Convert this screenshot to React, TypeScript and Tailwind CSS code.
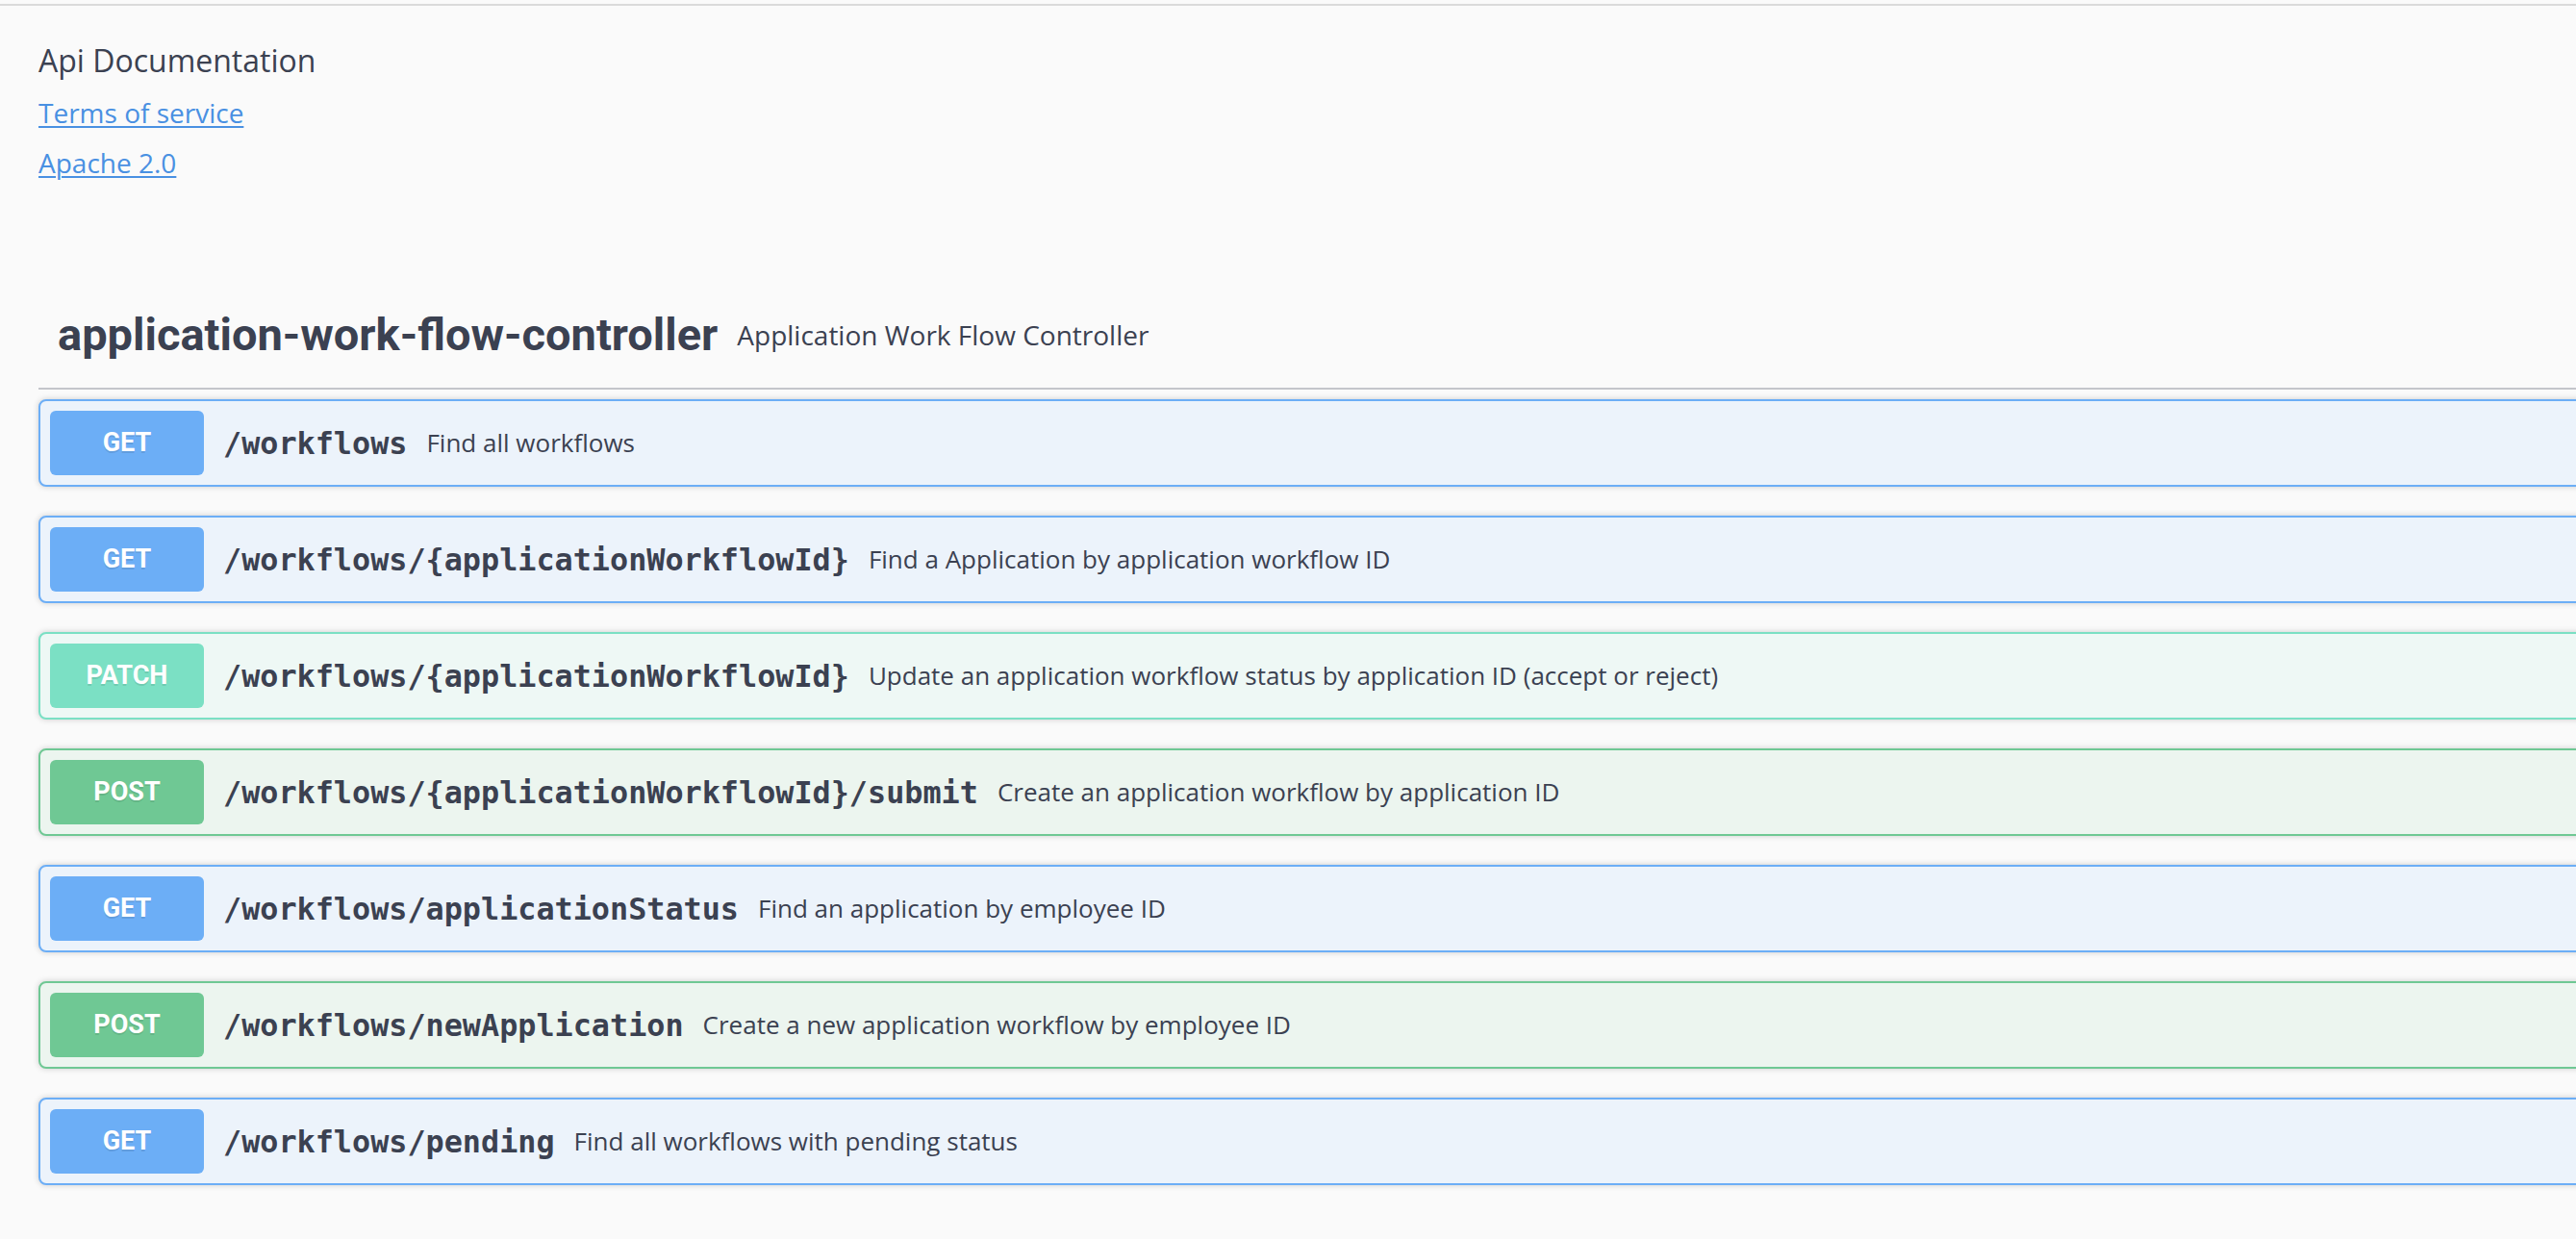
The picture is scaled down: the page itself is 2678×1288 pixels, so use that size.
const SANS = "font-['Open_Sans',sans-serif]";

type Method = "GET" | "POST" | "PATCH";

interface Operation {
  method: Method;
  path: string;
  summary: string;
}

const METHOD_STYLES: Record<Method, { block: string; badge: string }> = {
  GET: { block: "border-[#6caef6] bg-[#ecf3fb]", badge: "bg-[#6caef6]" },
  POST: { block: "border-[#6fc894] bg-[#ecf5ef]", badge: "bg-[#6fc894]" },
  PATCH: { block: "border-[#7be0c4] bg-[#eef8f5]", badge: "bg-[#7be0c4]" }
};

const OPERATIONS: Operation[] = [
  { method: "GET", path: "/workflows", summary: "Find all workflows" },
  {
    method: "GET",
    path: "/workflows/{applicationWorkflowId}",
    summary: "Find a Application by application workflow ID"
  },
  {
    method: "PATCH",
    path: "/workflows/{applicationWorkflowId}",
    summary: "Update an application workflow status by application ID (accept or reject)"
  },
  {
    method: "POST",
    path: "/workflows/{applicationWorkflowId}/submit",
    summary: "Create an application workflow by application ID"
  },
  { method: "GET", path: "/workflows/applicationStatus", summary: "Find an application by employee ID" },
  { method: "POST", path: "/workflows/newApplication", summary: "Create a new application workflow by employee ID" },
  { method: "GET", path: "/workflows/pending", summary: "Find all workflows with pending status" }
];

function OperationRow({ op }: { op: Operation }) {
  const style = METHOD_STYLES[op.method];
  return (
    <div
      className={`mb-[30px] flex items-center rounded-[8px] border-2 p-[10px] shadow-[0_0_6px_rgba(0,0,0,0.19)] ${style.block}`}
    >
      <span
        className={`flex h-[67px] w-[160px] shrink-0 items-center justify-center rounded-[6px] font-['Roboto',sans-serif] text-[27px] font-bold text-white [text-shadow:0_2px_0_rgba(0,0,0,0.1)] ${style.badge}`}
      >
        {op.method}
      </span>
      <span className="px-5 font-['DejaVu_Sans_Mono',monospace] text-[31.8px] font-bold text-[#3b4151]">
        {op.path}
      </span>
      <span className={`${SANS} text-[26px] text-[#3b4151]`}>{op.summary}</span>
    </div>
  );
}

export default function App() {
  return (
    <div className={`h-[1288px] w-full overflow-hidden bg-[#fafafa] ${SANS}`}>
      <div className="mt-1 h-[2px] w-full bg-[#dadada]" />
      <div className="w-[2920px] px-10">
        {/* info */}
        <div className="mt-[35px] text-[32px] leading-[44px] text-[#3b4151]">Api Documentation</div>
        <div className="mt-3 text-[28px] leading-[40px]">
          <a href="#" className="text-[#4990e2] underline decoration-[2px] underline-offset-[3px]">
            Terms of service
          </a>
        </div>
        <div className="mt-3 text-[28px] leading-[40px]">
          <a href="#" className="text-[#4990e2] underline decoration-[2px] underline-offset-[3px]">
            Apache 2.0
          </a>
        </div>

        {/* tag section */}
        <h4 className="mt-[111px] mb-[10px] flex items-center border-b-2 border-[#c4c5cb] pt-5 pr-10 pb-[27px] pl-5">
          <span className="font-['Roboto',sans-serif] text-[47px] leading-[56px] font-bold text-[#3b4151]">
            application-work-flow-controller
          </span>
          <small className="px-5 text-[28px] leading-[40px] text-[#3b4151]">Application Work Flow Controller</small>
        </h4>

        {OPERATIONS.map((op, i) => (
          <OperationRow key={i} op={op} />
        ))}
      </div>
    </div>
  );
}
